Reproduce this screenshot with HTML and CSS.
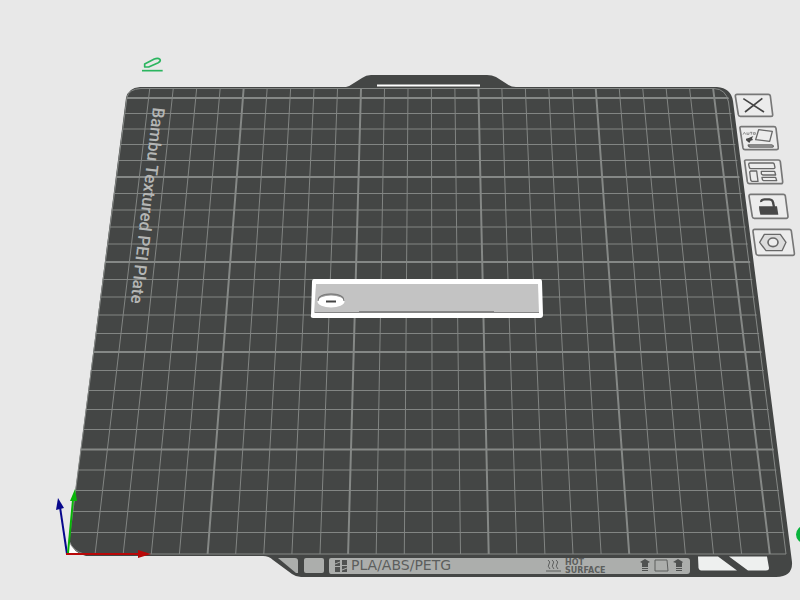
FILE: index.html
```html
<!DOCTYPE html>
<html lang="en">
<head>
<meta charset="utf-8">
<title>Build plate</title>
<link rel="stylesheet" href="styles.css">
</head>
<body>
<main class="stage">
  <svg class="scene" viewBox="0 0 800 600" role="img" aria-label="Bambu Textured PEI Plate">
    <defs>
      <clipPath id="bed"><path d="M127 97Q129 89 141 88.500H714Q727 89 730 102L787 555H82Q72 552 69 541Z"/></clipPath>
    </defs>

    <!-- plate body with the rear tab and front lip -->
    <path class="glint" d="M68 554V540L86 554Z"/>
    <path class="plate" d="M126 98Q128 88 140 87H346Q350 86 354 83L362 78Q366 75 371 75H487Q492 75 496 77L507 84Q511 87 516 87H717Q731 88 733 101L792 562Q793 577 776 577H301Q296 577 292 574L273 560Q269 556 263 556H86Q73 553 69 540Z"/>
    <path class="slot" d="M377 84.500H480V86.500H377Z"/>

    <!-- 10 mm grid -->
    <g clip-path="url(#bed)">
      <path class="grid" d="M149.700 89L95.100 554M173.200 89L123.200 554M196.600 89L151.300 554M220.100 89L179.400 554M267.100 89L235.700 554M290.600 89L263.800 554M314 89L291.900 554M337.500 89L320 554M384.500 89L376.200 554M408 89L404.300 554M431.400 89L432.400 554M454.900 89L460.500 554M501.900 89L516.800 554M525.400 89L544.900 554M548.800 89L573 554M572.300 89L601.100 554M619.300 89L657.300 554M642.800 89L685.400 554M666.200 89L713.500 554M689.700 89L741.600 554"/>
      <path class="grid" d="M60 113.500H790M60 129H790M60 144.500H790M60 160.500H790M60 193.500H790M60 210H790M60 227H790M60 244H790M60 279.500H790M60 297H790M60 315H790M60 333.500H790M60 370.500H790M60 390.500H790M60 409.500H790M60 429.500H790M60 470H790M60 490.500H790M60 511.500H790M60 532.500H790"/>
      <path class="grid bold" d="M243.600 89L207.600 554M361 89L348.100 554M478.400 89L488.700 554M595.800 89L629.200 554M713.200 89L769.800 554M60 98H790M60 177H790M60 262H790M60 352H790M60 449.500H790"/>
    </g>
    <path class="rim" d="M84 554Q73 551 69 541L127 97Q129 89 141 88.500H714Q726 89 728.500 102L786 554Z"/>

    <!-- front label strip -->
    <path class="strip" d="M278 558H295Q298 558 298 561V573H296Z"/>
    <rect class="strip" x="304" y="558" width="20" height="15" rx="2"/>
    <path class="strip" d="M331 558H687Q690 558 690 561V571Q690 574 687 574H331Q329 574 329 571V560Q329 558 331 558Z"/>
    <path class="window" d="M698 556.500H718L737 570.500H701Q699 570 698.500 568ZM729 556.500H767L769 568Q769 570.500 766 570.500H748Z"/>
    <path class="ink" d="M335 560H340V566H335ZM342 560H347V565H342ZM335 567H340V572H335ZM342 566H347V572H342Z"/>
    <path class="strip-cut" d="M335 564L340 562M342 570L347 568"/>
    <text class="material" x="351" y="570">PLA/ABS/PETG</text>
    <path class="ink-line" d="M548 560q3 2 1 4t1 5M552 560q3 2 1 4t1 5M556 560q3 2 1 4t1 5M546 571H561"/>
    <text class="hot" x="565" y="565">HOT</text>
    <text class="hot" x="565" y="573">SURFACE</text>
    <path class="ink" d="M645 559L650 562L648 563V567H642V563L640 562ZM678 559L683 562L682 563V567H676V563L673 562ZM642 568H648V569H642ZM642 570H648V571H642ZM676 568H682V569H676ZM676 570H682V571H676Z"/>
    <path class="ink-line" d="M655 560H667L668 571H655Z"/>

    <text class="plate-name" transform="translate(153 107) rotate(96.500)">Bambu Textured PEI Plate</text>

    <!-- selected model -->
    <path class="model-edge" d="M314 279H540Q542 279 542 282L543 315Q543 318 540 318H313Q310 318 311 315L312 282Q312 279 314 279Z"/>
    <path class="model" d="M316 284H538L539 313H314Z"/>
    <path class="model-shade" d="M315 312.500H539M359 311.500H494"/>
    <ellipse class="hole-back" cx="331" cy="298.500" rx="13" ry="5"/>
    <ellipse class="hole" cx="331" cy="301.500" rx="13.500" ry="6"/>
    <path class="hole-rim" d="M318 301Q318 294 331 294T344 301"/>
    <path class="hole-mark" d="M326 301.500H336"/>

    <!-- origin axes -->
    <g class="axis-z"><path d="M67 554L60 507"/><path class="head" d="M58 498L64 508L56 510Z"/></g>
    <g class="axis-y"><path d="M68 553L73 500"/><path class="head" d="M75 489L77 501L70 501Z"/></g>
    <g class="axis-x"><path d="M66 554H140"/><path class="head" d="M138 550L151 554L138 558Z"/></g>
    <circle class="marker" cx="805" cy="534.500" r="9"/>
  </svg>

  <button class="tool rename" type="button" aria-label="Rename plate">
    <svg viewBox="120 15 75 54"><path d="M134 51L134 42L163 27Q174 23 180 28Q183 33 175 38L146 51Z"/><path d="M126 62H188"/></svg>
  </button>
  <button class="tool remove" type="button" aria-label="Delete plate">
    <svg viewBox="132 39 120 75"><path class="frame" d="M141 43H235Q240 43 241 48L248 104Q248 109 243 109H151Q146 109 145 104L136 48Q136 43 141 43Z"/><path class="cross" d="M160 56L222 96M217 55L165 96"/></svg>
  </button>
  <button class="tool orient" type="button" aria-label="Auto orient">
    <svg viewBox="147 135 120 78"><path class="frame" d="M154 140H252Q257 140 258 145L265 204Q265 209 260 209H165Q160 209 159 204L150 145Q149 140 154 140Z"/><path d="M206 149L247 154L239 184L197 179ZM175 195H246Q253 198 248 201H180Q174 199 175 195Z"/><path class="thin" d="M159 164L163 157L168 164M171 157V163H177V157M180 157H187M184 157V164M190 158H196V163H190Z"/><path class="solid" d="M168 176L176 174L190 168L186 175L189 180L182 182L178 189L168 181Z"/></svg>
  </button>
  <button class="tool arrange" type="button" aria-label="Arrange objects">
    <svg viewBox="159 234 123 81"><path class="frame" d="M168 240H265Q270 240 271 245L278 305Q278 311 273 311H178Q173 311 172 305L164 245Q163 240 168 240Z"/><path d="M180 249H249Q253 250 253 254L255 262Q255 266 251 266H183Q179 266 178 262L176 253Q176 249 180 249ZM182 273H200L204 304H186Q183 303 182 300L179 276ZM214 274H254L257 285H219Q215 284 214 281ZM216 292H257L260 302H221Q217 301 217 298Z"/></svg>
  </button>
  <button class="tool lock" type="button" aria-label="Lock plate">
    <svg viewBox="174 339 123 81"><path class="frame" d="M182 343H280Q285 343 286 348L294 409Q294 415 289 415H193Q188 415 187 410L177 348Q177 343 182 343Z"/><path class="solid" d="M207 379H261L265 404H211Q207 392 207 379Z"/><path class="shackle" d="M214 366Q212 359 224 358H238Q248 359 249 367L252 381"/></svg>
  </button>
  <button class="tool settings" type="button" aria-label="Plate settings">
    <svg viewBox="183 444 135 87"><path class="frame" d="M194 448H298Q303 448 304 453L313 519Q314 526 308 526H205Q199 526 198 520L189 454Q189 448 194 448Z"/><path class="nut" d="M223 463H271L288 487L276 512H228L209 487Z"/><ellipse class="bore" cx="249" cy="487" rx="15" ry="13"/></svg>
  </button>
</main>
</body>
</html>
```

FILE: styles.css
```css
body {
  margin: 0;
  background: #e8e8e8;
}

.stage {
  position: relative;
  width: 100%;
  aspect-ratio: 4 / 3;
  overflow: hidden;
}

.scene {
  display: block;
  width: 100%;
}

.plate { fill: #444645; }
.glint { fill: #ffffff; }
.slot { fill: #ffffff; }
.grid { fill: none; stroke: #828583; stroke-width: 1; }
.grid.bold { stroke: #858886; stroke-width: 2; }
.rim { fill: none; stroke: #858886; stroke-width: 1; }
.strip { fill: #acaeac; }
.strip-cut { stroke: #acaeac; stroke-width: 1; }
.window { fill: #eef0ef; }
.ink { fill: #505251; }
.ink-line { fill: none; stroke: #5c5e5d; stroke-width: 1; }

.material,
.hot {
  font-family: "DejaVu Sans", sans-serif;
  fill: #5c5e5d;
}

.material { font-size: 14px; }
.hot { font-size: 8px; font-weight: 700; }

.plate-name {
  font-family: "Roboto", sans-serif;
  font-size: 17px;
  font-weight: 500;
  fill: #b4b6b5;
}

.model-edge, .hole { fill: #ffffff; }
.model { fill: #c3c3c3; }
.model-shade { stroke: #858585; stroke-width: 1; }
.hole-back { fill: #9a9a9a; }
.hole-rim { fill: none; stroke: #777777; stroke-width: 1; }
.hole-mark { stroke: #444444; stroke-width: 2; }

.axis-x, .axis-y, .axis-z { stroke-width: 2; }
.axis-x { stroke: #b80808; fill: #b80808; }
.axis-y { stroke: #08b408; fill: #08b408; }
.axis-z { stroke: #08088c; fill: #08088c; }
.head { stroke: none; }
.marker { fill: #08b33c; }

.tool {
  position: absolute;
  padding: 0;
  border: 0;
  background: none;
  cursor: pointer;
}

.tool svg {
  display: block;
  width: 100%;
  fill: none;
  stroke: #686868;
  stroke-width: 4;
  stroke-linejoin: round;
}

.tool .frame { fill: #ececec; stroke: #777777; stroke-width: 5; }
.tool .cross { stroke: #444444; stroke-width: 5; }
.tool .thin { stroke-width: 2; }
.tool .solid { fill: #484848; stroke: none; }
.tool .shackle { stroke: #484848; stroke-width: 7; }
.tool .nut { fill: #dcdcdc; }
.tool .bore { fill: #ececec; stroke-width: 5; }

.rename { left: calc(100% * 140 / 800); top: calc(100% * 55 / 600); width: calc(100% * 25 / 800); }
.rename svg { stroke: #2bb55f; stroke-width: 5; }
.remove { left: calc(100% * 734 / 800); top: calc(100% * 93 / 600); width: calc(100% * 40 / 800); }
.orient { left: calc(100% * 739 / 800); top: calc(100% * 125 / 600); width: calc(100% * 40 / 800); }
.arrange { left: calc(100% * 743 / 800); top: calc(100% * 158 / 600); width: calc(100% * 41 / 800); }
.lock { left: calc(100% * 748 / 800); top: calc(100% * 193 / 600); width: calc(100% * 41 / 800); }
.settings { left: calc(100% * 751 / 800); top: calc(100% * 228 / 600); width: calc(100% * 45 / 800); }
```
